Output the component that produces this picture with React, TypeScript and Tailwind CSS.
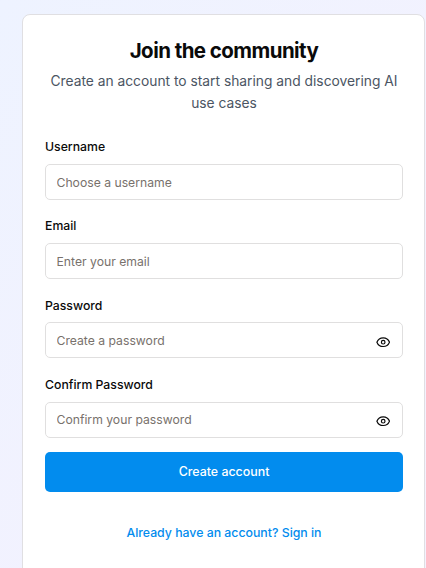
const fields = [
  { label: "Username", placeholder: "Choose a username", secret: false },
  { label: "Email", placeholder: "Enter your email", secret: false },
  { label: "Password", placeholder: "Create a password", secret: true },
  { label: "Confirm Password", placeholder: "Confirm your password", secret: true },
];

function EyeIcon() {
  return (
    <svg
      viewBox="0 0 24 24"
      className="mt-[4px] size-[14.4px]"
      fill="none"
      stroke="#0a0a0a"
      strokeWidth="2"
      strokeLinecap="round"
      strokeLinejoin="round"
    >
      <path d="M1.5 12C3.5 7 7.5 4.8 12 4.8S20.5 7 22.5 12C20.5 17 16.5 19.2 12 19.2S3.5 17 1.5 12Z" />
      <circle cx="12" cy="12" r="3" />
    </svg>
  );
}

export default function App() {
  return (
    <main className="h-[568px] w-[426px] overflow-hidden bg-gradient-to-br from-[#eef3ff] to-[#f5f1fe] pt-[14px] pl-[22px] font-['Inter',sans-serif] text-[#0a0a0a]">
      <section className="h-[600px] w-[403px] rounded-lg border border-[#e0dfe2] bg-white pr-[21px] pl-[22px]">
        <header className="pt-[22px] text-center">
          <h1 className="text-[20.5px] leading-[28px] font-bold tracking-[-0.55px]">Join the community</h1>
          <p className="mt-[5px] text-[13.8px] leading-[22px] whitespace-nowrap text-[#4b5563]">
            Create an account to start sharing and discovering AI
            <br />
            use cases
          </p>
        </header>
        <form className="mt-[26px]">
          {fields.map((f) => (
            <div key={f.label} className="h-[79.3px]">
              <label className="block h-[23.7px] text-[12.25px] leading-[13px] font-medium">{f.label}</label>
              <div className="flex h-9 items-center justify-between rounded-[5px] border border-[#e0dfdf] pr-[12px] pl-[10.5px]">
                <input
                  className={`w-60 text-[12.2px] outline-none placeholder:text-[#78716c] ${f.secret ? "pt-px" : "pt-[2.5px]"}`}
                  placeholder={f.placeholder}
                />
                {f.secret && <EyeIcon />}
              </div>
            </div>
          ))}
          <button type="button" className="-mt-[5px] block h-10 w-full rounded-[5px] bg-[#028cee] text-[12.4px] font-medium text-white">
            Create account
          </button>
        </form>
        <a className="mt-[31px] block text-center text-[12.3px] leading-[20px] font-medium text-[#028cee]">
          Already have an account? Sign in
        </a>
      </section>
    </main>
  );
}
